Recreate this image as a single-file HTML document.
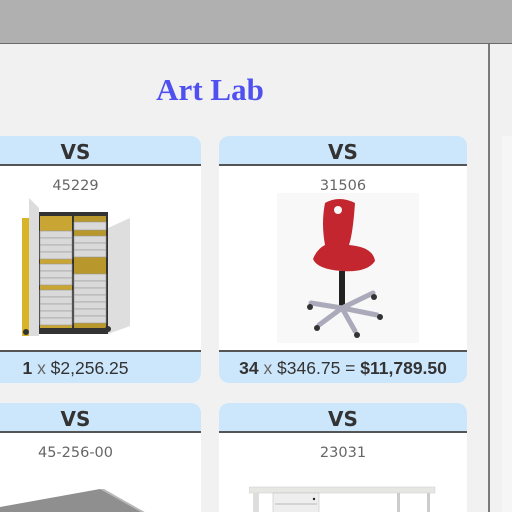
<!DOCTYPE html>
<html><head><style>
html,body{margin:0;width:512px;height:512px;overflow:hidden}
body{background:#f1f1f1;position:relative;font-family:"Liberation Sans",sans-serif}
.top{position:absolute;left:0;top:0;width:512px;height:43px;background:#b0b0b0;border-bottom:1px solid #6a6a6a}
.div{position:absolute;left:488px;top:44px;width:2px;height:468px;background:#7a7a7a}
.title{position:absolute;left:0;width:420px;top:72px;text-align:center;font-family:"Liberation Serif",serif;font-weight:bold;font-size:31px;color:#5050f0}
.card{position:absolute;overflow:hidden;border-radius:10px}
.body{position:absolute;left:0;right:0;top:30px;bottom:0;background:#fff}
.hd{position:relative;height:28px;background:#cce6fb;border-bottom:2px solid #555;text-align:center;font-family:"DejaVu Sans",sans-serif;font-weight:bold;font-size:20px;color:#333;line-height:32px}
.sku{position:relative;text-align:center;font-family:"DejaVu Sans",sans-serif;font-size:14.5px;color:#666;margin-top:12px}
.ft{position:absolute;left:0;right:0;bottom:0;height:31px;background:#cce6fb;border-top:2px solid #555;text-align:center;font-size:17.5px;color:#333;line-height:32px}
.ft .x{color:#666}
</style></head><body>
<div class="top"></div>
<div class="div"></div>
<div class="title">Art Lab</div>

<div class="card" style="left:-50px;top:136px;width:251px;height:247px">
 <div class="body"></div>
 <div class="hd">VS</div>
 <div class="sku">45229</div>
 <svg style="position:absolute;left:50px;top:50px" width="150" height="150">
  <rect x="22" y="32" width="8" height="120" fill="#d8b42a"/>
  <rect x="37" y="26" width="71" height="122" fill="#333"/>
  <rect x="40" y="30" width="32" height="112" fill="#c9a534"/>
  <rect x="74" y="30" width="32" height="112" fill="#b8982c"/>
  <g fill="#d9d9d9" stroke="#999" stroke-width="0.6">
   <rect x="40" y="45" width="32" height="7"/><rect x="40" y="52" width="32" height="7"/><rect x="40" y="59" width="32" height="7"/><rect x="40" y="66" width="32" height="7"/>
   <rect x="74" y="36" width="32" height="8"/><rect x="74" y="50" width="32" height="7"/><rect x="74" y="57" width="32" height="7"/><rect x="74" y="64" width="32" height="7"/>
   <rect x="40" y="78" width="32" height="7"/><rect x="40" y="85" width="32" height="7"/><rect x="40" y="92" width="32" height="7"/>
   <rect x="74" y="88" width="32" height="7"/><rect x="74" y="95" width="32" height="7"/><rect x="74" y="102" width="32" height="7"/><rect x="74" y="109" width="32" height="7"/><rect x="74" y="116" width="32" height="7"/><rect x="74" y="123" width="32" height="7"/><rect x="74" y="130" width="32" height="7"/>
   <rect x="40" y="104" width="32" height="7"/><rect x="40" y="111" width="32" height="7"/><rect x="40" y="118" width="32" height="7"/><rect x="40" y="125" width="32" height="7"/><rect x="40" y="132" width="32" height="7"/>
  </g>
  <polygon points="29,12 39,22 39,150 29,156" fill="#dcdcdc"/>
  <polygon points="108,42 130,32 130,140 108,148" fill="#dedede"/>
  <circle cx="26" cy="146" r="3" fill="#333"/><circle cx="40" cy="153" r="3" fill="#333"/><circle cx="108" cy="143" r="3" fill="#333"/>
 </svg>
 <div class="ft"><b>1</b> <span class="x">x</span> $2,256.25</div>
</div>

<div class="card" style="left:219px;top:136px;width:248px;height:247px">
 <div class="body"></div>
 <div class="hd">VS</div>
 <div class="sku">31506</div>
 <svg style="position:absolute;left:58px;top:57px" width="142" height="150">
  <rect width="142" height="150" fill="#f8f8f8"/>
  <path d="M48,10 Q62,2 78,10 Q76,40 72,52 Q96,54 98,68 Q90,80 64,78 Q40,76 36,66 Q40,56 48,52 Q44,30 48,10Z" fill="#c4262f"/>
  <circle cx="61" cy="17" r="4" fill="#f8f8f8"/>
  <rect x="62" y="78" width="6" height="40" fill="#222"/>
  <g stroke="#aab" stroke-width="5" stroke-linecap="round">
   <line x1="65" y1="115" x2="34" y2="110"/><line x1="65" y1="115" x2="96" y2="100"/>
   <line x1="65" y1="115" x2="100" y2="122"/><line x1="65" y1="115" x2="42" y2="132"/><line x1="65" y1="115" x2="78" y2="138"/>
  </g>
  <g fill="#333"><circle cx="33" cy="114" r="3"/><circle cx="97" cy="104" r="3"/><circle cx="103" cy="124" r="3"/><circle cx="40" cy="135" r="3"/><circle cx="80" cy="142" r="3"/></g>
 </svg>
 <div class="ft"><b>34</b> <span class="x">x</span> $346.75 = <b>$11,789.50</b></div>
</div>

<div class="card" style="left:-50px;top:403px;width:251px;height:119px">
 <div class="body"></div>
 <div class="hd">VS</div>
 <div class="sku">45-256-00</div>
 <svg style="position:absolute;left:50px;top:82px" width="150" height="30">
  <polygon points="0,30 0,22 100,4 148,30" fill="#8f8f90"/>
  <polygon points="100,4 104,4 150,30 146,30" fill="#b8b8b8"/>
 </svg>
</div>

<div class="card" style="left:219px;top:403px;width:248px;height:119px">
 <div class="body"></div>
 <div class="hd">VS</div>
 <div class="sku">23031</div>
 <svg style="position:absolute;left:30px;top:82px" width="210" height="30">
  <rect x="0" y="2" width="186" height="6" fill="#e6e6e2" stroke="#ccc" stroke-width="0.5"/>
  <rect x="4" y="8" width="6" height="22" fill="#ddd"/>
  <rect x="24" y="8" width="46" height="22" fill="#eee" stroke="#bbb" stroke-width="0.5"/>
  <line x1="26" y1="19" x2="68" y2="19" stroke="#bbb"/>
  <circle cx="65" cy="14" r="1.2" fill="#222"/>
  <rect x="148" y="8" width="3" height="22" fill="#ccc"/><rect x="178" y="8" width="3" height="22" fill="#ccc"/>
 </svg>
</div>

<div style="position:absolute;left:502px;top:136px;width:10px;height:376px;background:#f6f6f6"></div>
</body></html>
